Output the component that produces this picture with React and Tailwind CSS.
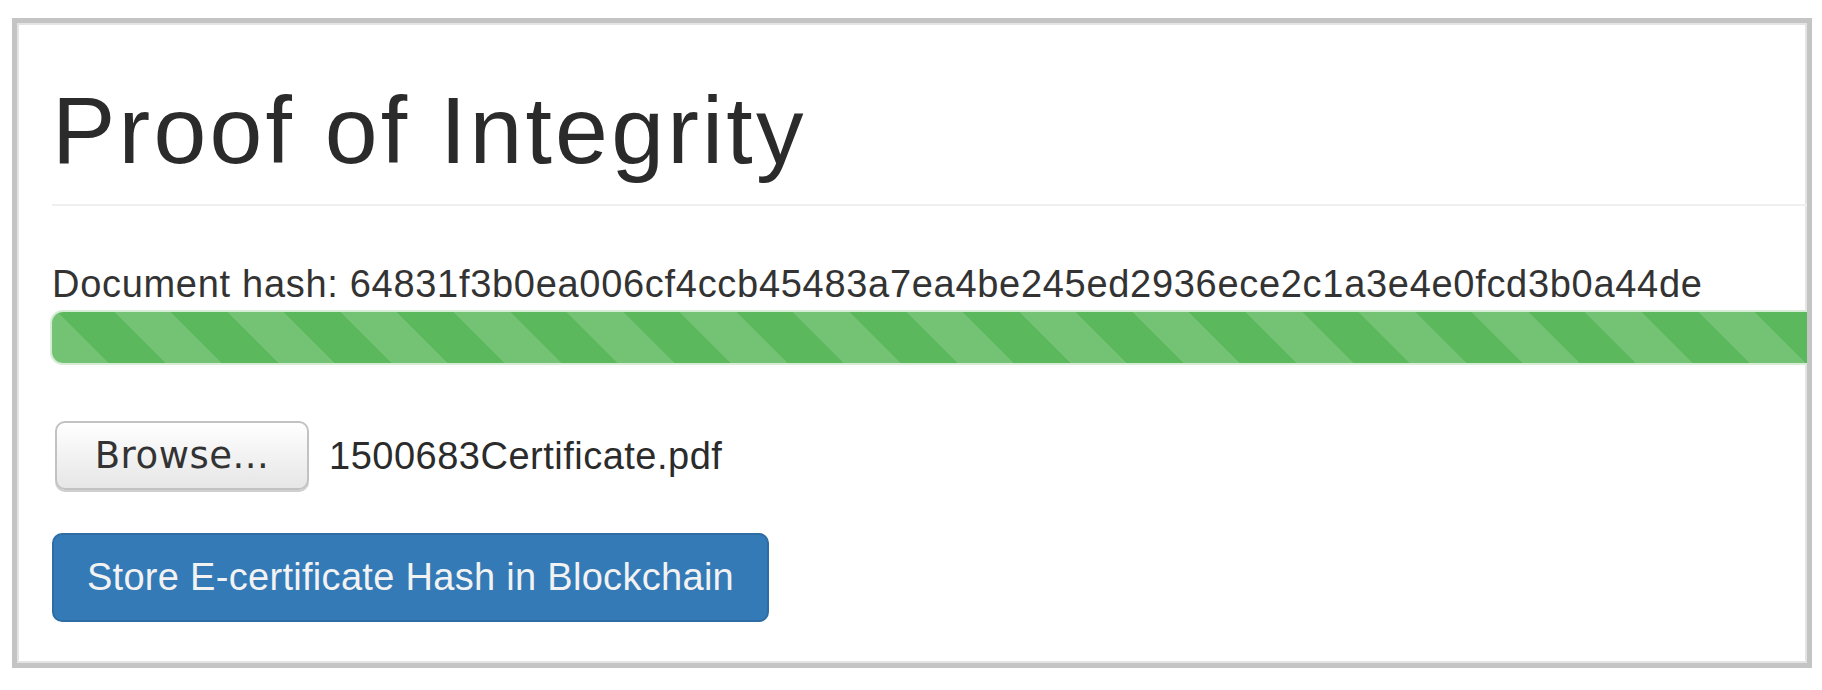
export default function App() {
  return (
    <div className="w-[1822px] h-[690px] bg-white pt-[18px] pl-[12px] font-['Liberation_Sans',Arial,sans-serif]">
      <div className="w-[1800px] h-[650px] border-[5px] border-[#c4c4c4] shadow-[inset_0_0_0_2px_#e4e4e4] overflow-hidden pl-[35px] bg-white">
        <h1 className="mt-[54px] text-[95px] leading-[106px] tracking-[3.2px] text-[#2b2b2b] whitespace-nowrap">
          Proof of Integrity
        </h1>
        <div className="mt-[21px] h-[2px] w-[1800px] bg-[#efefef]" />
        <div className="mt-[56px] text-[38px] leading-[44px] tracking-[0.7px] text-[#333333] whitespace-nowrap">
          Document hash: 64831f3b0ea006cf4ccb45483a7ea4be245ed2936ece2c1a3e4e0fcd3b0a44de
        </div>
        <div className="mt-[6px] h-[51px] w-[1800px] rounded-l-[11px] shadow-[0_0_0_2px_#d6ecd6] bg-[repeating-linear-gradient(45deg,#74c374_0_40px,#5cb85c_40px_80px)]" />
        <div className="mt-[58px] flex items-center gap-[20px]">
          <button className="ml-[3px] w-[254px] h-[69px] rounded-[10px] border-2 border-[#c2c2c2] bg-gradient-to-b from-white to-[#e6e6e6] shadow-[0_2px_0_#cfcfcf] font-['DejaVu_Sans',sans-serif] text-[37px] tracking-[0.5px] text-[#333333] flex items-center justify-center">
            Browse...
          </button>
          <span className="text-[38px] leading-[44px] tracking-[0.5px] text-[#2b2b2b] whitespace-nowrap">
            1500683Certificate.pdf
          </span>
        </div>
        <button className="mt-[43px] w-[717px] h-[89px] rounded-[10px] bg-[#337ab7] border-2 border-[#2e6da4] text-[38px] tracking-[0.3px] text-[#f2f2f2] flex items-center justify-center whitespace-nowrap">
          Store E-certificate Hash in Blockchain
        </button>
      </div>
    </div>
  );
}
